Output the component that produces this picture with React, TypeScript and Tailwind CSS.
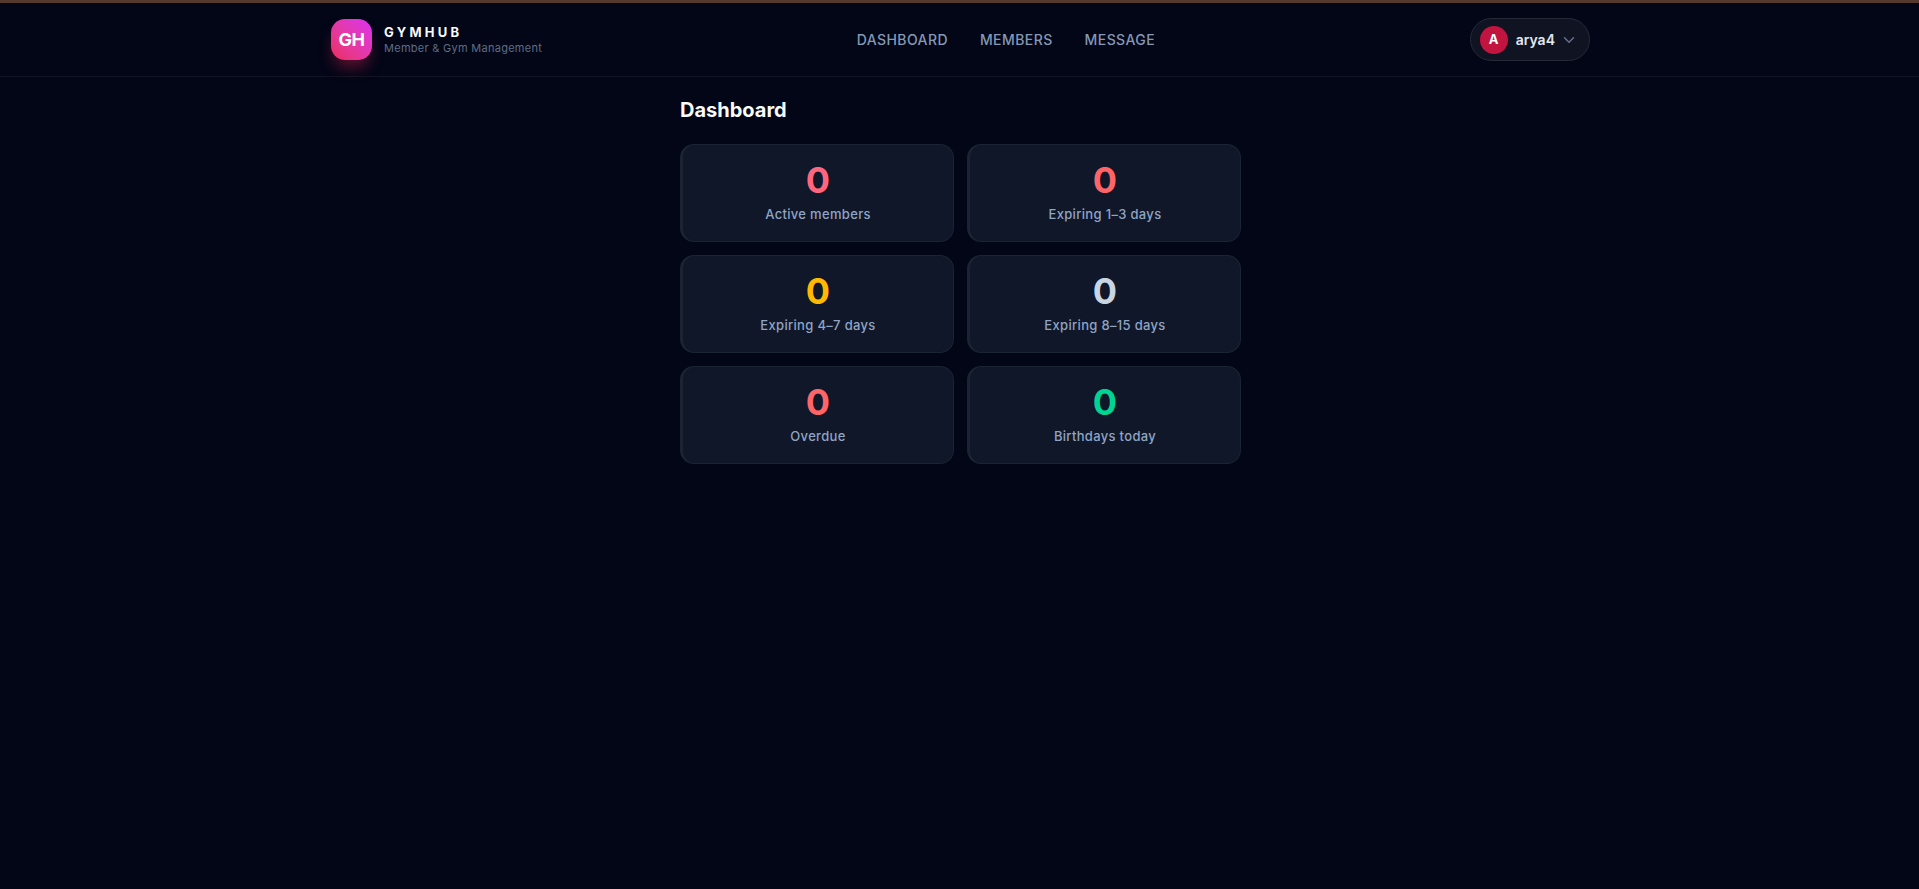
import { ChevronDown } from 'lucide-react'

interface Stat {
  label: string
  value: number
  color: string
}

const navItems = ['Dashboard', 'Members', 'Message']

const stats: Stat[] = [
  { label: 'Active members', value: 0, color: 'text-[#ff667d]' },
  { label: 'Expiring 1–3 days', value: 0, color: 'text-[#ff6467]' },
  { label: 'Expiring 4–7 days', value: 0, color: 'text-[#ffb900]' },
  { label: 'Expiring 8–15 days', value: 0, color: 'text-[#cad5e2]' },
  { label: 'Overdue', value: 0, color: 'text-[#ff6467]' },
  { label: 'Birthdays today', value: 0, color: 'text-[#00d492]' },
]

function Header() {
  return (
    <header className="border-b border-white/6 pr-4 pl-[18px]">
      <div className="mx-auto flex h-[73px] max-w-[1259px] items-center justify-between">
        <a href="#" className="flex items-center gap-3">
          <span className="flex size-[41px] items-center justify-center rounded-[14px] bg-linear-to-tr from-[#ec2a5c] to-[#dc2ef0] text-lg font-bold tracking-tight text-white shadow-[0_10px_15px_-3px_rgba(236,32,86,0.4)]">
            GH
          </span>
          <span className="flex flex-col">
            <span className="text-[13px] leading-4 font-bold tracking-[0.25em] text-slate-50">GYMHUB</span>
            <span className="text-[11px] leading-4 tracking-wide text-[#5f6d84]">Member &amp; Gym Management</span>
          </span>
        </a>

        <nav className="flex items-center gap-8">
          {navItems.map((item) => (
            <a
              key={item}
              href={`#${item.toLowerCase()}`}
              className="text-sm font-medium tracking-[0.03em] text-[#8598b4] uppercase hover:text-white"
            >
              {item}
            </a>
          ))}
        </nav>

        <button
          type="button"
          className="flex h-[43px] items-center rounded-full border border-[#252a39] bg-[#101322] pr-[11px] pl-[9px]"
        >
          <span className="flex size-7 items-center justify-center rounded-full bg-[#c1143f] text-[13px] font-bold text-white">
            A
          </span>
          <span className="mr-[5px] ml-2 text-sm font-semibold text-slate-200">arya4</span>
          <ChevronDown className="size-[18px] text-[#64718a]" strokeWidth={2} />
        </button>
      </div>
    </header>
  )
}

function StatCard({ label, value, color }: Stat) {
  return (
    <div className="flex flex-col items-center rounded-[14px] border border-l-3 border-[#1b2433] bg-[#0f1729] px-4 pt-[17px] pb-4">
      <p className={`text-4xl leading-9 font-bold ${color}`}>{value}</p>
      <p className="mt-[5px] text-[13px] leading-[22px] font-medium tracking-wide text-[#90a4c4]">{label}</p>
    </div>
  )
}

export default function App() {
  return (
    <div className="min-h-screen border-t-3 border-[#54392f] bg-[#020617] font-['Inter',sans-serif] text-white [font-optical-sizing:none]">
      <Header />
      <div className="pr-4 pl-[18px]">
        <main className="mx-auto max-w-[561px] pt-[18px] pb-8">
          <h1 className="text-xl leading-[30px] font-bold text-slate-50">Dashboard</h1>
          <div className="mt-[19px] grid grid-cols-2 gap-[13px]">
            {stats.map((stat) => (
              <StatCard key={stat.label} {...stat} />
            ))}
          </div>
        </main>
      </div>
    </div>
  )
}
